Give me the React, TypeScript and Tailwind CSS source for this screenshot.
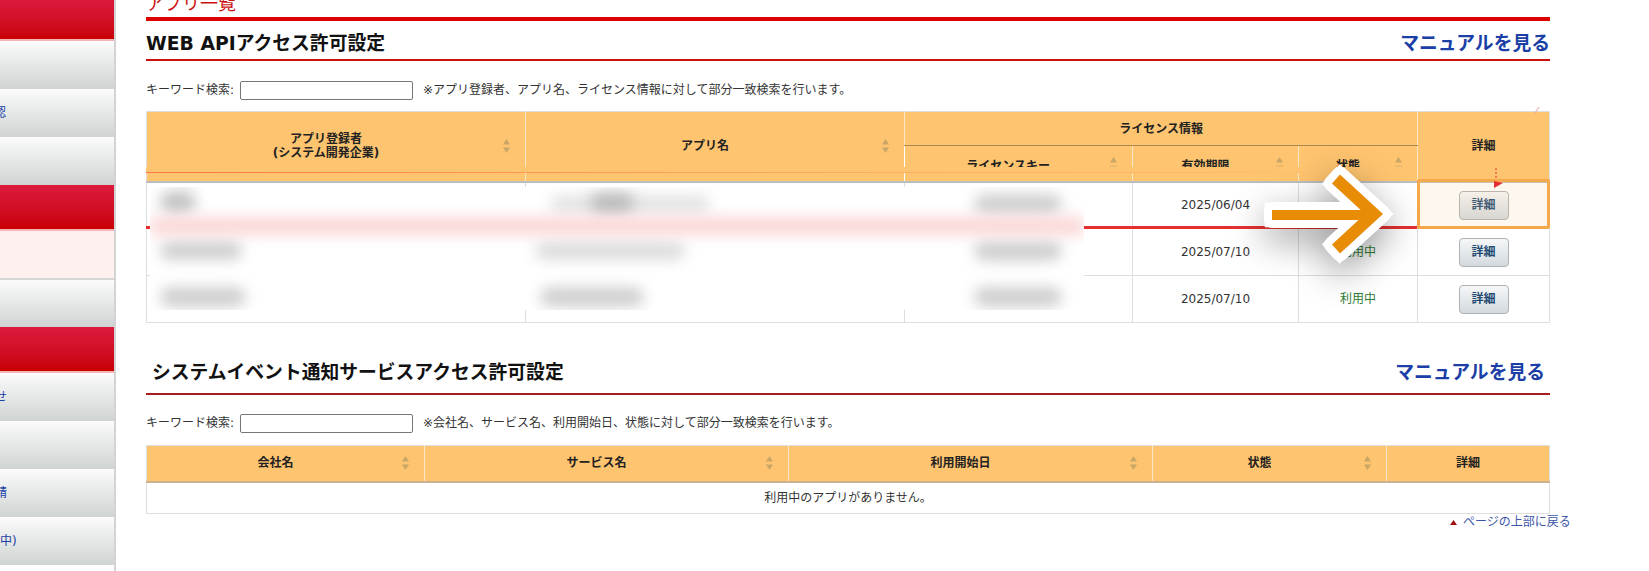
import React from 'react';

const JP = "font-['DejaVu_Sans','Noto_Sans_CJK_JP',sans-serif]";

type NavItem = { kind: 'red' | 'gray' | 'pink'; h: string; label?: string; shift?: string };

const navItems: NavItem[] = [
  { kind: 'red', h: 'h-[41px]' },
  { kind: 'gray', h: 'h-[48px]' },
  { kind: 'gray', h: 'h-[48px]', label: '認', shift: '-ml-[6px]' },
  { kind: 'gray', h: 'h-[48px]' },
  { kind: 'red', h: 'h-[46px]' },
  { kind: 'pink', h: 'h-[49px]' },
  { kind: 'gray', h: 'h-[47px]' },
  { kind: 'red', h: 'h-[46px]' },
  { kind: 'gray', h: 'h-[48px]', label: 'せ', shift: '-ml-[5px]' },
  { kind: 'gray', h: 'h-[48px]' },
  { kind: 'gray', h: 'h-[48px]', label: '請', shift: '-ml-[5px]' },
  { kind: 'gray', h: 'h-[48px]', label: '中)', shift: 'ml-0' },
];

const Sort = ({ only }: { only?: boolean }) => (
  <svg
    width="9"
    height="16"
    viewBox="0 0 9 16"
    className={`absolute right-[14px] -translate-y-1/2 ${only ? 'top-[calc(50%+1px)]' : 'top-1/2'}`}
  >
    <path d="M4.5 1 L8 6.5 L1 6.5 Z" fill="#c9a566" />
    {only ? (
      <rect x="1" y="9.5" width="7" height="1" fill="#d9ae6a" />
    ) : (
      <path d="M4.5 15 L8 9.5 L1 9.5 Z" fill="#c9a566" />
    )}
  </svg>
);

const Th = ({
  children,
  sort,
  only,
  className = '',
  rowSpan,
  colSpan,
}: {
  children: React.ReactNode;
  sort?: boolean;
  only?: boolean;
  className?: string;
  rowSpan?: number;
  colSpan?: number;
}) => (
  <th
    rowSpan={rowSpan}
    colSpan={colSpan}
    className={`relative bg-[#fec46f] border-l border-[#fbe6c6] first:border-l-0 text-[12px] leading-[14px] font-bold text-[#222] text-center ${
      sort ? 'pr-[20px]' : ''
    } ${only ? 'pt-[5px]' : ''} ${className}`}
  >
    {children}
    {sort && <Sort only={only} />}
  </th>
);

const DetailButton = () => (
  <button className="mx-auto block h-[29px] w-[50px] rounded-[4px] border border-[#aeb2b4] bg-gradient-to-b from-[#f6f8f9] to-[#d2d9de] text-[12px] font-bold text-[#1f4a72]">
    詳細
  </button>
);

const SectionHeading = ({ title, indent }: { title: string; indent?: boolean }) => (
  <div
    className={`flex items-center justify-between border-b-[2px] ${
      indent ? 'h-[41px] pl-[6px] pr-[5px] border-[#a81c1c]' : 'h-[31px] border-[#cc1111]'
    }`}
  >
    <h2 className="text-[18.8px] font-bold text-[#111]">{title}</h2>
    <a className="text-[18.8px] font-bold text-[#1b3fa6]">マニュアルを見る</a>
  </div>
);

const SearchRow = ({ note }: { note: string }) => (
  <div className="flex items-center h-[20px] text-[12px] text-[#333]">
    <span className="w-[94px] whitespace-nowrap">キーワード検索:</span>
    <input className="h-[19px] w-[173px] rounded-[2px] border border-[#767676] bg-white" />
    <span className="ml-[10px]">{note}</span>
  </div>
);

const rows = ['2025/06/04', '2025/07/10', '2025/07/10'];

const blobs = [
  'left-[10px] top-[4px] w-[36px] h-[22px] bg-[#c4c4c4]',
  'left-[400px] top-[8px] w-[160px] h-[18px] bg-[#e4e4e4]',
  'left-[440px] top-[6px] w-[44px] h-[20px] bg-[#bcbcbc]',
  'left-[824px] top-[7px] w-[88px] h-[20px] bg-[#cfcfcf]',
  'left-[10px] top-[54px] w-[82px] h-[19px] bg-[#cfcfcf]',
  'left-[385px] top-[55px] w-[150px] h-[18px] bg-[#dcdcdc]',
  'left-[824px] top-[54px] w-[88px] h-[20px] bg-[#cfcfcf]',
  'left-[10px] top-[100px] w-[86px] h-[20px] bg-[#cfcfcf]',
  'left-[390px] top-[100px] w-[104px] h-[20px] bg-[#d0d0d0]',
  'left-[824px] top-[100px] w-[88px] h-[20px] bg-[#cfcfcf]',
];

const ARROW = 'M22 60 L110.7 60 L82 33.4 L90 24.6 L133 64 L90 103.4 L82 94.6 L108.5 70 L22 70 Z';

export default function App() {
  return (
    <div className={`relative h-[571px] w-[1649px] overflow-hidden bg-white ${JP}`}>
      <div className="flex h-full">
        {/* sidebar, cut off on the left */}
        <div className="w-[116px] shrink-0 border-r-[2px] border-[#d3d3d3]">
          {navItems.map((item, i) => (
            <div
              key={i}
              className={`${item.h} flex items-center overflow-hidden text-[12px] text-[#1b3fa6] ${
                item.kind === 'red'
                  ? 'border-b-[2px] border-[#f5b5b5] bg-gradient-to-b from-[#dc1a3c] to-[#c80000]'
                  : item.kind === 'pink'
                    ? 'border-b-[2px] border-[#d6d6d6] bg-[#fff0f0]'
                    : 'bg-gradient-to-b from-[#fbfcfb] to-[#cfd4d3]'
              }`}
            >
              {item.label && <span className={`whitespace-nowrap ${item.shift}`}>{item.label}</span>}
            </div>
          ))}
        </div>

        <div className="ml-[30px] w-[1404px]">
          <div className="-mt-[8px] h-[29px] border-b-[4px] border-[#dd0000] text-[18px] leading-[24px] text-[#cc1111]">アプリ一覧</div>

          <div className="mt-[9px]">
            <SectionHeading title="WEB APIアクセス許可設定" />
          </div>
          <div className="mt-[19px]">
            <SearchRow note="※アプリ登録者、アプリ名、ライセンス情報に対して部分一致検索を行います。" />
          </div>

          <table className="mt-[11px] w-full table-fixed border-collapse border border-[#dedede]">
            <colgroup>
              <col className="w-[379px]" />
              <col className="w-[379px]" />
              <col className="w-[228px]" />
              <col className="w-[166px]" />
              <col className="w-[119px]" />
              <col />
            </colgroup>
            <thead>
              <tr className="h-[34px]">
                <Th rowSpan={2} sort>
                  アプリ登録者
                  <br />
                  (システム開発企業)
                </Th>
                <Th rowSpan={2} sort>アプリ名</Th>
                <Th colSpan={3} className="border-b border-b-[#a98a52]">ライセンス情報</Th>
                <Th rowSpan={2}>詳細</Th>
              </tr>
              <tr className="h-[36px] border-b-[2px] border-[#bdbdbd]">
                <Th sort only>ライセンスキー</Th>
                <Th sort only>有効期限</Th>
                <Th sort only>状態</Th>
              </tr>
            </thead>
            <tbody>
              {rows.map((date, i) => (
                <tr key={i} className="h-[47px] border-b border-[#dedede] text-[12px] text-[#333] text-center">
                  <td className="border-r border-[#dedede]" />
                  <td className="border-r border-[#dedede]" />
                  <td className="border-r border-[#dedede]" />
                  <td className="border-r border-[#dedede]">{date}</td>
                  <td className="border-r border-[#dedede] text-[#2e7d32]">利用中</td>
                  <td><DetailButton /></td>
                </tr>
              ))}
            </tbody>
          </table>

          <div className="mt-[31px]">
            <SectionHeading title="システムイベント通知サービスアクセス許可設定" indent />
          </div>
          <div className="mt-[18px]">
            <SearchRow note="※会社名、サービス名、利用開始日、状態に対して部分一致検索を行います。" />
          </div>

          <table className="mt-[12px] w-full table-fixed border-collapse border border-[#dedede]">
            <colgroup>
              <col className="w-[278px]" />
              <col className="w-[364px]" />
              <col className="w-[364px]" />
              <col className="w-[234px]" />
              <col />
            </colgroup>
            <thead>
              <tr className="h-[36px] border-b-[2px] border-[#c8b290]">
                <Th sort>会社名</Th>
                <Th sort>サービス名</Th>
                <Th sort>利用開始日</Th>
                <Th sort>状態</Th>
                <Th>詳細</Th>
              </tr>
            </thead>
            <tbody>
              <tr className="h-[32px] text-[12px] text-[#333] text-center">
                <td colSpan={5}>利用中のアプリがありません。</td>
              </tr>
            </tbody>
          </table>

          <div className="relative">
            <a className="absolute left-[1304px] top-0 flex h-[16px] items-center whitespace-nowrap text-[12px] text-[#3a55a8]">
              <svg width="7" height="5" viewBox="0 0 7 5" className="mr-[6px]">
                <path d="M3.5 0 L7 5 L0 5 Z" fill="#a01010" />
              </svg>
              ページの上部に戻る
            </a>
          </div>
        </div>
      </div>

      {/* redaction patch painted over the table */}
      <div className="absolute left-[150px] top-[187px] h-[123px] w-[934px] overflow-hidden bg-white">
        {blobs.map((b) => (
          <div key={b} className={`absolute rounded-full blur-[7px] ${b}`} />
        ))}
        <div className="absolute left-0 top-[30px] h-[18px] w-full bg-[#fbd6d6] blur-[7px]" />
      </div>

      {/* band covering the bottom of the sub headers */}
      <div className="absolute left-[146px] top-[167px] h-[5px] w-[1271px] bg-[#fec46f]" />
      <div className="absolute left-[146px] top-[172px] h-px w-[1271px] bg-gradient-to-r from-[#ff7a45] via-[#ffa85c] via-50% to-[#fec46f]" />

      {/* red annotation line */}
      <div className="absolute left-[146px] top-[226px] h-[3px] w-[4px] bg-[#e63030]" />
      <div className="absolute left-[1084px] top-[226px] h-[3px] w-[333px] bg-[#e63030]" />

      {/* highlight on the first detail button */}
      <div className="absolute left-[1417px] top-[179px] h-[50px] w-[133px] rounded-[2px] border-[3px] border-[#f5a94a] bg-[#f7c98a]/15" />

      <svg className="absolute left-[1490px] top-[166px]" width="16" height="24" viewBox="0 0 16 24">
        <path d="M6 2 L6 13" stroke="#e63030" strokeWidth="1" strokeDasharray="2 2" />
        <path d="M4 15 L13 17 L4 22 Z" fill="#e63030" />
      </svg>
      <svg className="absolute left-[1534px] top-[107px]" width="6" height="7" viewBox="0 0 6 7">
        <path d="M5 0 L1 6" stroke="#e6a0a0" strokeWidth="1" />
      </svg>

      {/* big arrow */}
      <svg
        className="absolute left-[1250px] top-[150px] drop-shadow-[0_12px_18px_rgba(0,0,0,0.4)]"
        width="150"
        height="125"
        viewBox="0 0 150 125"
      >
        <path d={ARROW} fill="#fff" stroke="#fff" strokeWidth="16" strokeLinejoin="round" />
        <path d={ARROW} fill="#fff" stroke="#fff" strokeWidth="14.5" strokeLinejoin="miter" />
        <path d={ARROW} fill="#e88b05" />
      </svg>
    </div>
  );
}
